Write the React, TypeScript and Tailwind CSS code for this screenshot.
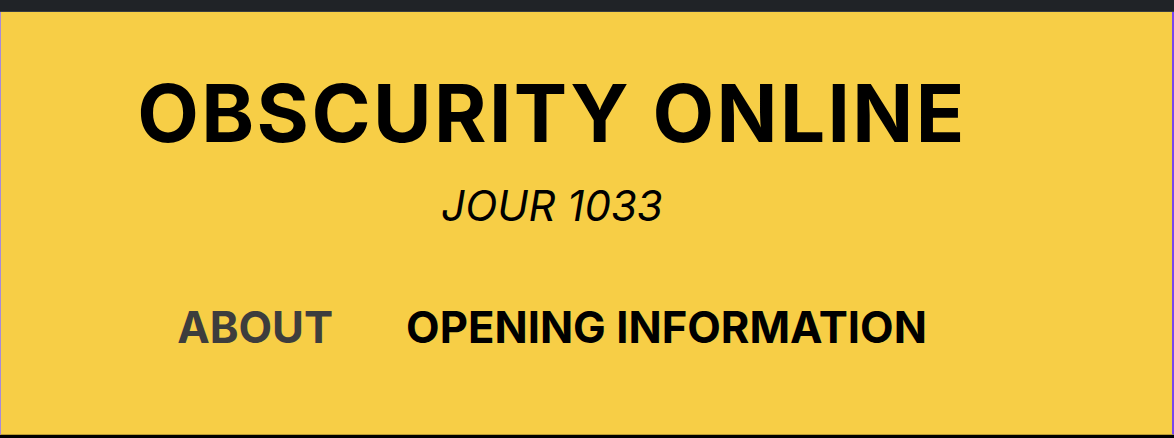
import React from 'react';

const App: React.FC = () => {
  return (
    <div className="w-[1174px] h-[438px] bg-black overflow-hidden" style={{ fontFamily: 'Inter, "Noto Sans", sans-serif' }}>
      {/* Top bar */}
      <div className="h-[12px] bg-[#202327] border-b border-[#3a3d40]" />

      {/* Header */}
      <header className="h-[423px] bg-[#f7ce46] border-l border-l-[#a98ad8] border-r-2 border-r-[#7b45ee] border-b border-b-[#b99a32]">
        <div className="w-[1102px] flex flex-col items-center">
          <h1 className="mt-[61px] text-[80px] leading-none font-bold tracking-[0.03em] text-black">
            OBSCURITY ONLINE
          </h1>
          <p className="mt-[32px] text-[42px] leading-none italic text-black">JOUR 1033</p>
          <nav className="mt-[79px] flex items-center gap-[73px] text-[43.6px] leading-none font-bold">
            <a className="text-[#3d3d3d]">ABOUT</a>
            <a className="text-black">OPENING INFORMATION</a>
          </nav>
        </div>
      </header>
    </div>
  );
};

export default App;
